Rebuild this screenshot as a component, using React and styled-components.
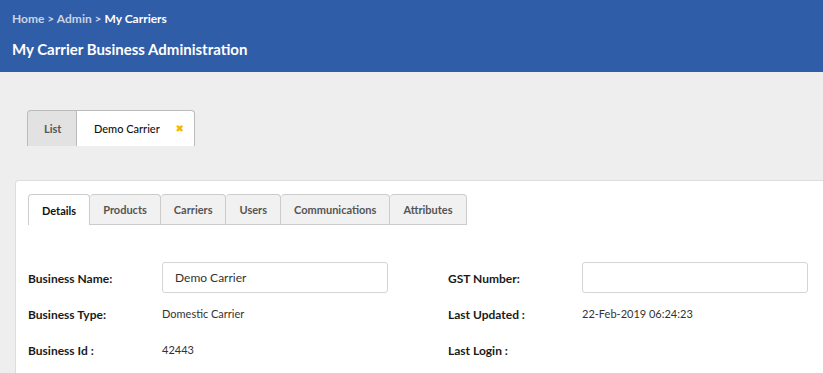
import React from "react";
import styled, { createGlobalStyle } from "styled-components";

const GlobalStyle = createGlobalStyle`
  body {
    margin: 0;
    background: #eeeeee;
    font-family: Lato, "Open Sans", sans-serif;
    overflow: hidden;
  }
`;

const App = () => {
  return (
    <>
      <GlobalStyle />
      <Header>
        <Breadcrumb>
          <Crumb>Home</Crumb> &gt; <Crumb>Admin</Crumb> &gt; <Current>My Carriers</Current>
        </Breadcrumb>
        <Title>My Carrier Business Administration</Title>
      </Header>
      <Main>
        <OuterTabs>
          <OuterTab>List</OuterTab>
          <OuterTab active>
            Demo Carrier
            <Close>✖</Close>
          </OuterTab>
        </OuterTabs>
        <Card>
          <InnerTabs>
            <InnerTab active>Details</InnerTab>
            <InnerTab>Products</InnerTab>
            <InnerTab>Carriers</InnerTab>
            <InnerTab>Users</InnerTab>
            <InnerTab>Communications</InnerTab>
            <InnerTab>Attributes</InnerTab>
          </InnerTabs>
          <Form>
            <Label>Business Name:</Label>
            <Input defaultValue="Demo Carrier" />
            <Label>GST Number:</Label>
            <Input defaultValue="" />
            <Label>Business Type:</Label>
            <Value>Domestic Carrier</Value>
            <Label>Last Updated :</Label>
            <Value>22-Feb-2019 06:24:23</Value>
            <Label>Business Id :</Label>
            <Value>42443</Value>
            <Label>Last Login :</Label>
            <Value></Value>
          </Form>
        </Card>
      </Main>
    </>
  );
};

export default App;

const Header = styled.div`
  background: #305da7;
  height: 72px;
  box-sizing: border-box;
  padding: 11px 12px 0;
  color: #fff;
`;

const Breadcrumb = styled.div`
  font-size: 12px;
  font-weight: 700;
  color: #c9d4e8;
  line-height: 15px;
`;

const Crumb = styled.span``;

const Current = styled.span`
  color: #fff;
`;

const Title = styled.div`
  margin-top: 14px;
  font-size: 15px;
  font-weight: 700;
  line-height: 18px;
`;

const Main = styled.div`
  padding: 38px 0 0 15px;
`;

const OuterTabs = styled.div`
  display: flex;
  margin-left: 12px;
`;

const OuterTab = styled.div`
  height: 36px;
  box-sizing: border-box;
  display: flex;
  align-items: center;
  padding: ${(p) => (p.active ? "0 10px 0 17px" : "0 15px 0 16px")};
  border: 1px solid #bbbbbb;
  border-bottom: none;
  border-left: ${(p) => (p.active ? "none" : "1px solid #bbbbbb")};
  border-radius: ${(p) => (p.active ? "0 4px 0 0" : "4px 0 0 0")};
  background: ${(p) => (p.active ? "#ffffff" : "#e2e2e2")};
  color: ${(p) => (p.active ? "#111" : "#555")};
  font-size: 11px;
  font-weight: ${(p) => (p.active ? 500 : 700)};
  width: ${(p) => (p.active ? "118px" : "50px")};
`;

const Close = styled.span`
  margin-left: auto;
  color: #f2b600;
  font-size: 10px;
  font-family: "DejaVu Sans", sans-serif;
`;

const Card = styled.div`
  margin-top: 34px;
  background: #fff;
  border-top: 1px solid #dddddd;
  border-left: 1px solid #dddddd;
  border-top-left-radius: 4px;
  padding: 13px 0 40px 12px;
  min-height: 160px;
`;

const InnerTabs = styled.div`
  display: flex;
`;

const InnerTab = styled.div`
  height: 31px;
  box-sizing: border-box;
  display: flex;
  align-items: center;
  padding: 0 13px;
  border: 1px solid #cccccc;
  border-bottom: ${(p) => (p.active ? "none" : "1px solid #cccccc")};
  border-left: ${(p) => (p.active ? "1px solid #cccccc" : "none")};
  border-radius: 4px 4px 0 0;
  background: ${(p) => (p.active ? "#ffffff" : "#f1f1f1")};
  color: ${(p) => (p.active ? "#111" : "#555")};
  font-size: 11px;
  font-weight: 700;
`;

const Form = styled.div`
  margin-top: 37px;
  display: grid;
  grid-template-columns: 134px 226px 60px 134px 226px;
  grid-auto-rows: 31px;
  row-gap: 5px;
  align-items: center;
  & > :nth-child(4n + 3) {
    grid-column: 4;
  }
`;

const Label = styled.div`
  font-size: 12px;
  font-weight: 700;
  color: #1a1a1a;
  padding-top: 1px;
`;

const Value = styled.div`
  font-size: 11px;
  color: #333;
`;

const Input = styled.input`
  height: 31px;
  box-sizing: border-box;
  border: 1px solid #d4d4d4;
  border-radius: 3px;
  padding: 0 12px;
  font-family: Lato, sans-serif;
  font-size: 12px;
  color: #333;
  outline: none;
  width: 100%;
`;
